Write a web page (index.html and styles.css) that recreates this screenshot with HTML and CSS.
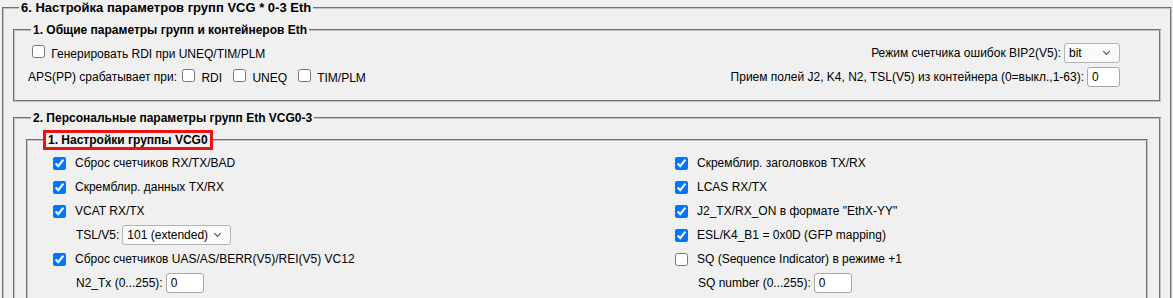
FILE: index.html
```html
<!DOCTYPE html>
<html lang="ru">
<head>
  <meta charset="UTF-8" />
  <title>Настройка параметров групп VCG</title>
  <link rel="stylesheet" href="styles.css">
</head>
<body>

  <!-- 6. VCG groups -->
  <fieldset class="outer">
    <legend>6. Настройка параметров групп VCG * 0-3 Eth</legend>

    <!-- Common parameters -->
    <fieldset class="group">
      <legend>1. Общие параметры групп и контейнеров Eth</legend>
      <div class="row split">
        <label class="check"><input type="checkbox"> Генерировать RDI при UNEQ/TIM/PLM</label>
        <div class="right-field">
          <span>Режим счетчика ошибок BIP2(V5):</span>
          <span class="select-wrap">
            <select class="sel-bit">
              <option>bit</option>
              <option>block</option>
            </select>
          </span>
        </div>
      </div>
      <div class="row split">
        <div class="aps">
          <span>APS(PP) срабатывает при:</span>
          <label class="check inline first"><input type="checkbox"> RDI</label>
          <label class="check inline"><input type="checkbox"> UNEQ</label>
          <label class="check inline"><input type="checkbox"> TIM/PLM</label>
        </div>
        <div class="right-field">
          <span>Прием полей J2, K4, N2, TSL(V5) из контейнера (0=выкл.,1-63):</span>
          <input type="text" class="num num-small" value="0">
        </div>
      </div>
    </fieldset>

    <!-- Per-group parameters -->
    <fieldset class="group second">
      <legend>2. Персональные параметры групп Eth VCG0-3</legend>

      <fieldset class="vcg">
        <legend class="marked">1. Настройки группы VCG0</legend>
        <div class="columns">
          <div class="col">
            <label class="row check"><input type="checkbox" checked> Сброс счетчиков RX/TX/BAD</label>
            <label class="row check"><input type="checkbox" checked> Скремблир. данных TX/RX</label>
            <label class="row check"><input type="checkbox" checked> VCAT RX/TX</label>
            <div class="row sub">
              <span>TSL/V5:</span>
              <span class="select-wrap">
                <select class="sel-tsl">
                  <option>101 (extended)</option>
                  <option>010 (async)</option>
                </select>
              </span>
            </div>
            <label class="row check"><input type="checkbox" checked> Сброс счетчиков UAS/AS/BERR(V5)/REI(V5) VC12</label>
            <div class="row sub">
              <span>N2_Tx (0...255):</span>
              <input type="text" class="num" value="0">
            </div>
          </div>
          <div class="col">
            <label class="row check"><input type="checkbox" checked> Скремблир. заголовков TX/RX</label>
            <label class="row check"><input type="checkbox" checked> LCAS RX/TX</label>
            <label class="row check"><input type="checkbox" checked> J2_TX/RX_ON в формате "EthX-YY"</label>
            <label class="row check"><input type="checkbox" checked> ESL/K4_B1 = 0x0D (GFP mapping)</label>
            <label class="row check"><input type="checkbox"> SQ (Sequence Indicator) в режиме +1</label>
            <div class="row sub">
              <span>SQ number (0...255):</span>
              <input type="text" class="num" value="0">
            </div>
          </div>
        </div>
      </fieldset>
    </fieldset>
  </fieldset>

</body>
</html>
```

FILE: styles.css
```css
body {
  margin: 0;
  background: #f0f0f0;
  font-family: "Liberation Sans", Arial, sans-serif;
  font-size: 12px;
  color: #000;
  overflow: hidden;
}

fieldset {
  border: 2px groove #c4c4c4;
  margin: 0;
  min-width: 0;
}

legend {
  font-weight: bold;
  line-height: 16px;
  padding: 0 2px;
}

.outer {
  margin: 0 1px 0 2px;
  padding: 6px 9px 20px;
}

.outer > legend {
  font-size: 13px;
  margin-left: 6px;
}

.group {
  padding: 3px 12px 11px 13px;
}

.group > legend {
  margin-left: 3px;
}

.second {
  margin-top: 8px;
  padding: 4px 12px 20px 12px;
}

.second > legend {
  margin-left: 4px;
}

.vcg {
  margin: 0 -1px;
  padding: 1px 10px 20px 21px;
}

.vcg > legend.marked {
  margin-left: -6px;
  border: 3px solid #ee1111;
  line-height: 14px;
  padding: 0 2px;
}

.row {
  display: flex;
  align-items: center;
  height: 24px;
}

.split {
  justify-content: space-between;
}

.right-field {
  display: flex;
  align-items: center;
  gap: 3px;
  margin-right: 27px;
}

.check input {
  margin: 0 3px 0 4px;
  width: 13px;
  height: 13px;
}

.aps {
  display: flex;
  align-items: center;
}

.aps .check.inline input {
  margin-left: 11px;
}

.aps .check.inline.first input {
  margin-left: 5px;
}

.columns {
  display: grid;
  grid-template-columns: 622px 1fr;
}

.col .check input {
  margin-right: 9px;
}

.sub {
  padding-left: 27px;
  gap: 3px;
}

.select-wrap {
  position: relative;
  display: inline-block;
}

.select-wrap::after {
  content: "";
  position: absolute;
  right: 11px;
  top: 6px;
  width: 4px;
  height: 4px;
  border-right: 1px solid #444;
  border-bottom: 1px solid #444;
  transform: rotate(45deg);
  pointer-events: none;
}

select {
  appearance: none;
  display: block;
  font-family: "Liberation Sans", Arial, sans-serif;
  font-size: 12px;
  height: 20px;
  padding: 0 4px;
  border: 1px solid #b4b4b4;
  border-radius: 3px;
  background: #f9f9f9;
  color: #000;
}

.sel-bit {
  width: 56px;
}

.sel-tsl {
  width: 109px;
}

.num {
  font-family: "Liberation Sans", Arial, sans-serif;
  font-size: 12px;
  box-sizing: border-box;
  width: 38px;
  height: 20px;
  padding: 0 4px;
  border: 1px solid #a8a8a8;
  border-radius: 3px;
  background: #fff;
}

.num-small {
  width: 33px;
}
```
